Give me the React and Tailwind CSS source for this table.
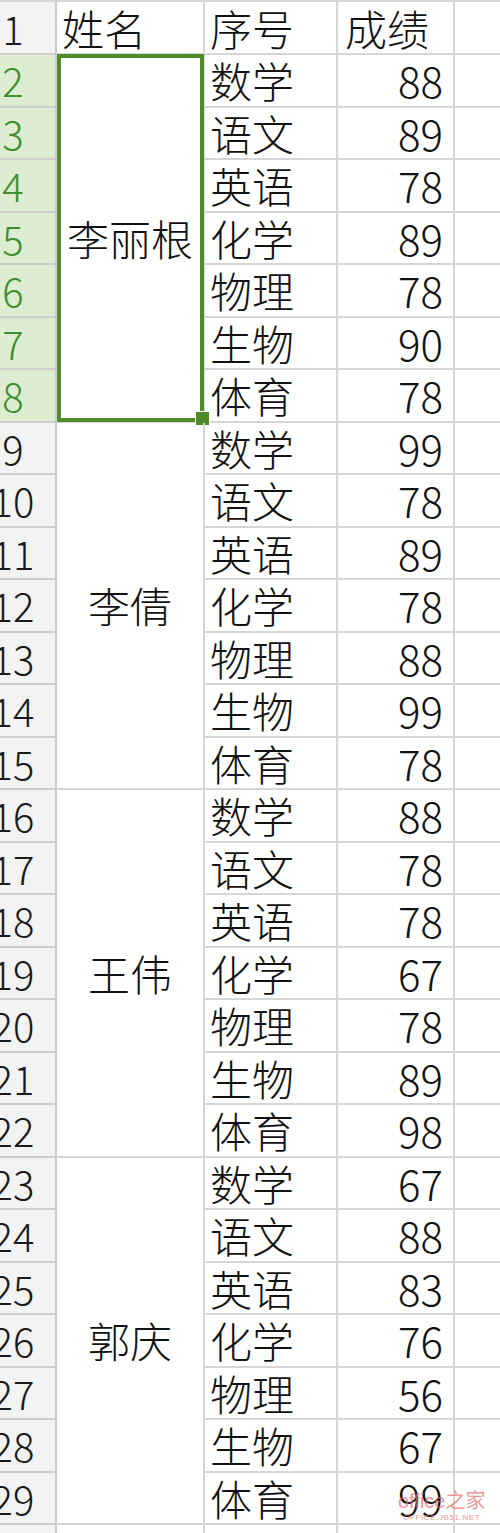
import React from 'react';

const subjects = ['数学', '语文', '英语', '化学', '物理', '生物', '体育'];

const students = [
  { name: '李丽根', scores: [88, 89, 78, 89, 78, 90, 78] },
  { name: '李倩', scores: [99, 78, 89, 78, 88, 99, 78] },
  { name: '王伟', scores: [88, 78, 78, 67, 78, 89, 98] },
  { name: '郭庆', scores: [67, 88, 83, 76, 56, 67, 99] },
];

const font = { fontFamily: '"Noto Sans CJK SC", "Noto Sans", sans-serif' };

function RowHead({ n, selected }) {
  return (
    <div
      className={`flex items-center border-r-2 border-b-2 border-[#cdcdcd] ${
        selected ? 'bg-[#dcedd2] text-[#3f8f2f]' : 'bg-[#f3f3f3] text-[#1a1a1a]'
      }`}
    >
      <div className="flex w-[26px] justify-center text-[40px] leading-[48px]">{n}</div>
    </div>
  );
}

function App() {
  const cells = [];

  // header row
  cells.push(<RowHead key="h0" n={1} />);
  cells.push(
    <div key="h1" className="flex items-center border-r-2 border-b-2 border-[#d6d6d6] pl-[5px] text-[42px] leading-[48px]">
      姓名
    </div>
  );
  cells.push(
    <div key="h2" className="flex items-center border-r-2 border-b-2 border-[#d6d6d6] pl-[5px] text-[42px] leading-[48px]">
      序号
    </div>
  );
  cells.push(
    <div key="h3" className="flex items-center border-r-2 border-b-2 border-[#d6d6d6] pl-[7px] text-[42px] leading-[48px]">
      成绩
    </div>
  );
  cells.push(<div key="h4" className="border-b-2 border-[#d6d6d6]" />);

  let row = 2;
  students.forEach((s, si) => {
    subjects.forEach((sub, i) => {
      const r = row++;
      cells.push(<RowHead key={`a${r}`} n={r} selected={si === 0} />);
      if (i === 0) {
        cells.push(
          <div
            key={`b${r}`}
            className="relative row-span-7 flex items-center justify-center border-r-2 border-b-2 border-[#d6d6d6] text-[42px] leading-[48px]"
          >
            {s.name}
            {si === 0 && (
              <>
                <div className="absolute left-0 top-[-1px] right-[-1px] bottom-[-1px] border-4 border-[#4e8c2c]" />
                <div className="absolute right-[-6px] bottom-[-4px] h-[13px] w-[13px] bg-[#4e8c2c] ring-1 ring-white" />
              </>
            )}
          </div>
        );
      }
      cells.push(
        <div key={`c${r}`} className="flex items-center border-r-2 border-b-2 border-[#d6d6d6] pl-[5px] text-[42px] leading-[48px]">
          {sub}
        </div>
      );
      cells.push(
        <div key={`d${r}`} className="flex items-center justify-end border-r-2 border-b-2 border-[#d6d6d6] pr-[10px] text-[42px] leading-[48px]">
          {s.scores[i]}
        </div>
      );
      cells.push(<div key={`e${r}`} className="border-b-2 border-[#d6d6d6]" />);
    });
  });

  // partial row 30
  cells.push(<RowHead key="a30" n="" />);
  cells.push(<div key="b30" className="border-r-2 border-[#d6d6d6]" />);
  cells.push(<div key="c30" className="border-r-2 border-[#d6d6d6]" />);
  cells.push(<div key="d30" className="border-r-2 border-[#d6d6d6]" />);
  cells.push(<div key="e30" />);

  return (
    <div className="relative h-[1533px] w-[500px] overflow-hidden bg-white font-light text-[#111]" style={font}>
      <div className="grid grid-cols-[57px_148px_133px_117px_1fr] grid-rows-[53px] auto-rows-[52.5px] border-t-2 border-[#d6d6d6]">
        {cells}
      </div>

      {/* watermark */}
      <div className="absolute left-[398px] top-[1490px] flex flex-col items-center whitespace-nowrap font-normal text-[#e46d6d] opacity-70">
        <div className="text-[20px] leading-[22px]" style={{ fontFamily: '"Liberation Sans", "Noto Sans CJK SC", sans-serif' }}>
          office之家
        </div>
        <div className="mt-[1px] text-[8px] leading-[9px] tracking-[0.6px]" style={{ fontFamily: '"Liberation Sans", sans-serif' }}>
          OFFICE.JB51.NET
        </div>
      </div>
    </div>
  );
}

export default App;
